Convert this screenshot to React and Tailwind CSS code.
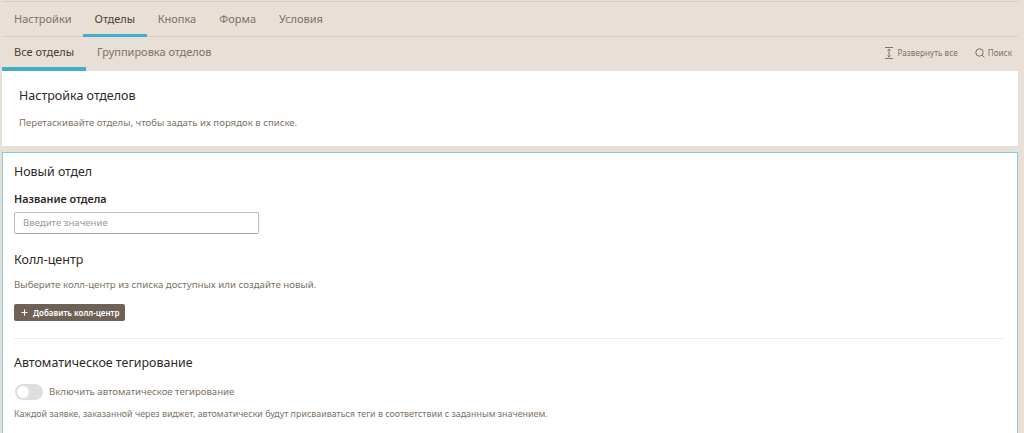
import React from "react";
import { Plus } from "lucide-react";

const mainTabs = ["Кнопка", "Форма", "Условия"];

export default function App() {
  return (
    <div className="h-[433px] w-[1024px] overflow-hidden bg-[#e8dfd6] pr-[6px] pl-[2px] font-['Noto_Sans',sans-serif]">
      <div className="h-[37px] border-b border-[#d8cdc1] pt-[1px]">
        <div className="flex h-[35px] border-t border-[#d8cdc1] pt-[1px]">
          <div className="flex h-[34px]">
            <a className="flex h-full items-center px-[12px] pb-[2px] text-[11px] text-[#7d7265]">Настройки</a>
            <a className="-ml-[1px] flex h-full items-center border-b-[3px] border-[#41afca] px-[12px] pt-[1px] text-[11px] text-[#4a4036]">Отделы</a>
            {mainTabs.map((t) => (
              <a key={t} className="flex h-full items-center pr-[12.500px] pb-[2px] pl-[10.500px] text-[11px] text-[#7d7265]">{t}</a>
            ))}
          </div>
        </div>
      </div>
      <div className="flex h-[34px] items-stretch justify-between">
        <div className="flex">
          <a className="flex items-center border-b-[4px] border-[#41afca] pr-[11.500px] pl-[12px] pt-[1px] text-[11px] text-[#4a4036]">Все отделы</a>
          <a className="flex items-center pr-[12px] pl-[11.500px] pb-[3px] text-[11px] text-[#7d7265]">Группировка отделов</a>
        </div>
        <div className="flex items-center gap-[3px] pr-[6px] pb-[2px] text-[8.200px] text-[#7d7265]">
          <span className="flex items-center gap-[5px]">
            <svg width="8" height="12" viewBox="0 0 8 12" fill="none" stroke="#7d7265" strokeWidth="1">
              <path d="M0 .5h8M0 11.500h8M4 2v8M2.500 3.500 4 2l1.500 1.500M2.500 8.500 4 10l1.500-1.500" />
            </svg>
            Развернуть все
          </span>
          <span className="ml-[14px] flex items-center gap-[3px]">
            <svg width="10" height="10" viewBox="0 0 10 10" fill="none" stroke="#7d7265" strokeWidth="1">
              <circle cx="4.500" cy="4.500" r="3.700" />
              <path d="m7 7 2.500 2.500" />
            </svg>
            Поиск
          </span>
        </div>
      </div>
      <section className="h-[75px] bg-white px-[17px] pt-[16px]">
        <h2 className="text-[12.500px] leading-[18px] text-[#2e2a25]">Настройка отделов</h2>
        <p className="mt-[11px] text-[9.600px] leading-[14px] text-[#7d7265]">Перетаскивайте отделы, чтобы задать их порядок в списке.</p>
      </section>
      <section className="mt-[6px] h-[290px] border border-[#7fcfdc] bg-white px-[11px] pt-[10px]">
        <h2 className="text-[12.400px] leading-[18px] text-[#2e2a25]">Новый отдел</h2>
        <label className="mt-[10px] block text-[10.800px] leading-[16px] font-semibold text-[#2e2a25]">Название отдела</label>
        <div className="mt-[5px] flex h-[22px] w-[245px] items-center rounded-[2px] border border-[#bdbdbd] border-b-[#aaaaaa] px-[8px] text-[9.600px] text-[#9a9a9a]">Введите значение</div>
        <h2 className="mt-[17px] text-[12.500px] leading-[18px] text-[#2e2a25]">Колл-центр</h2>
        <p className="mt-[9px] text-[9.700px] leading-[14px] text-[#7d7265]">Выберите колл-центр из списка доступных или создайте новый.</p>
        <button className="mt-[12px] flex h-[17px] w-[111px] items-center gap-[4px] rounded-[2px] bg-[#6d6255] pl-[6px] text-[8px] font-semibold text-white">
          <Plus size={9} strokeWidth={3} />
          Добавить колл-центр
        </button>
        <hr className="mt-[17px] border-[#eeeeee]" />
        <h2 className="mt-[15px] text-[12.450px] leading-[18px] text-[#2e2a25]">Автоматическое тегирование</h2>
        <div className="mt-[12px] flex items-center gap-[6px]">
          <span className="ml-[1px] flex h-[16px] w-[28px] items-center rounded-full bg-[#dedede] pl-[2px]">
            <span className="h-[12px] w-[12px] rounded-full bg-white" />
          </span>
          <span className="text-[9.600px] text-[#7d7265]">Включить автоматическое тегирование</span>
        </div>
        <p className="mt-[7px] text-[8.900px] leading-[14px] text-[#7d7265]">Каждой заявке, заказанной через виджет, автоматически будут присваиваться теги в соответствии с заданным значением.</p>
      </section>
    </div>
  );
}
